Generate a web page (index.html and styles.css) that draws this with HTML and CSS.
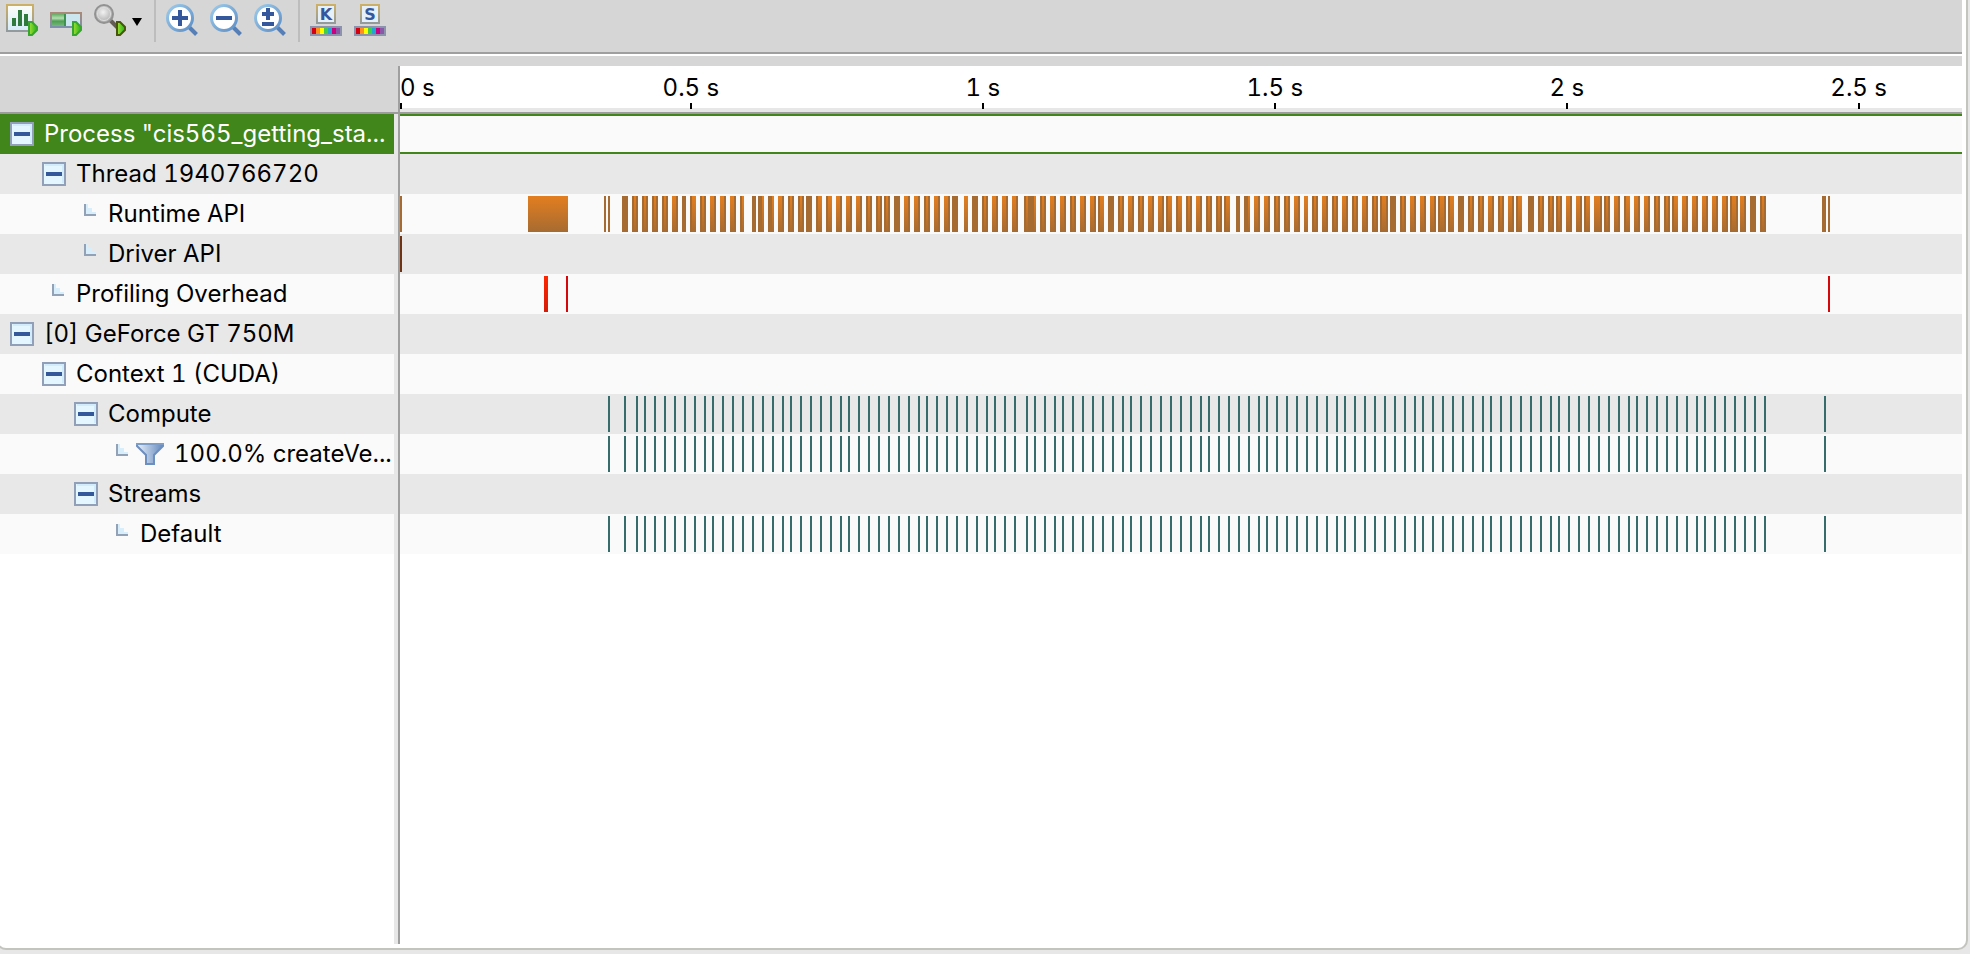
FILE: index.html
```html
<!DOCTYPE html>
<html lang="en">
<head>
<meta charset="utf-8">
<title>Profiler timeline</title>
<link rel="stylesheet" href="styles.css">
</head>
<body>
<svg class="defs" width="0" height="0" aria-hidden="true">
  <defs>
    <linearGradient id="call" x1="0" y1="0" x2="0" y2="1"><stop offset="0" stop-color="#e37e1f"/><stop offset="1" stop-color="#a66b31"/></linearGradient>
    <linearGradient id="hot" x1="0" y1="0" x2="0" y2="1"><stop offset="0" stop-color="#ff2600"/><stop offset="1" stop-color="#d41c08"/></linearGradient>
    <linearGradient id="paper" x1="0" y1="0" x2="0" y2="1"><stop offset="0" stop-color="#fdfdf8"/><stop offset="1" stop-color="#d5ebf8"/></linearGradient>
    <linearGradient id="frame" x1="0" y1="0" x2="0" y2="1"><stop offset="0" stop-color="#cdb067"/><stop offset="1" stop-color="#919a9c"/></linearGradient>
    <linearGradient id="tube" x1="0" y1="0" x2="0" y2="1"><stop offset="0" stop-color="#a98a78"/><stop offset="1" stop-color="#7c91ae"/></linearGradient>
    <linearGradient id="fill" x1="0" y1="0" x2="0" y2="1"><stop offset="0" stop-color="#63ad63"/><stop offset=".35" stop-color="#b4deb0"/><stop offset=".6" stop-color="#4f9f55"/><stop offset="1" stop-color="#74b978"/></linearGradient>
    <radialGradient id="ball" cx=".45" cy=".4" r=".6"><stop offset="0" stop-color="#f2f2f2"/><stop offset="1" stop-color="#a9a9a9"/></radialGradient>
    <linearGradient id="rim" x1="0" y1="0" x2="1" y2="1"><stop offset="0" stop-color="#9ccbea"/><stop offset="1" stop-color="#5e8fc6"/></linearGradient>
    <linearGradient id="funnel" x1="0" y1="0" x2="1" y2="0"><stop offset=".1" stop-color="#dbe6f4"/><stop offset="1" stop-color="#6389bd"/></linearGradient>
    <linearGradient id="go" x1="0" y1="0" x2="1" y2="0"><stop offset="0" stop-color="#a6e034"/><stop offset="1" stop-color="#1fb41c"/></linearGradient>
    <symbol id="arrow" viewBox="0 0 32 32"><path d="M23 18h3l5 5v3l-5 5h-3z" fill="url(#go)" stroke-width="2"/></symbol>
    <symbol id="lens" viewBox="0 0 32 32">
      <path d="M23 23l7.500 7.500" stroke="#557fb6" stroke-width="4"/>
      <circle cx="14" cy="14" r="12.500" fill="#fff" stroke="url(#rim)" stroke-width="3"/>
    </symbol>
    <symbol id="palette" viewBox="0 0 32 32">
      <rect x="7" y="1" width="18" height="18" fill="#e6f0fb" stroke="url(#frame)" stroke-width="2"/>
      <path d="M0 22h32v10H0z" fill="#8b93ad"/>
      <path d="M2 24h4v6H2z" fill="#d20012"/><path d="M6 24h4v6H6z" fill="#ff8f1f"/><path d="M10 24h4v6h-4z" fill="#ffff00"/><path d="M14 24h4v6h-4z" fill="#43cc48"/><path d="M18 24h4v6h-4z" fill="#22a5d2"/><path d="M22 24h4v6h-4z" fill="#ca0080"/><path d="M26 24h4v6h-4z" fill="#8959a8"/>
    </symbol>
    <symbol id="minus" viewBox="0 0 24 24"><path d="M1 1h22v22H1z" fill="#e4f6ff" stroke="#91a0b8" stroke-width="2"/><path d="M3 3h18v18" fill="none" stroke="#d3ecfb" stroke-width="2"/><path d="M4 10h16v4H4z" fill="#35589a"/></symbol>
    <symbol id="corner" viewBox="0 0 24 24"><path d="M12 2h2v4h4v4h4v2H12z" fill="#d8effb"/><path d="M10 2h2v10h10v2H10z" fill="#93a1b6"/></symbol>
  </defs>
</svg>

<div class="window">
  <header class="toolbar" role="toolbar" aria-label="Timeline tools">
    <button class="tool" aria-label="Generate analysis"><svg viewBox="0 0 32 32">
      <rect x="1" y="1" width="26" height="26" fill="url(#paper)" stroke="url(#frame)" stroke-width="2"/>
      <path d="M6 14h4v8H6zM12 6h4v16h-4zM18 10h4v12h-4z" fill="#2f7a3c"/>
      <use href="#arrow" stroke="#37a52f"/></svg></button>
    <button class="tool" aria-label="Run timeline"><svg viewBox="0 0 32 32">
      <rect x="1" y="9" width="30" height="14" fill="#cbe6ee" stroke="url(#tube)" stroke-width="2"/>
      <path d="M2 10h13v12H2z" fill="url(#fill)"/><path d="M14 10h2v12h-2z" fill="#3f9150"/>
      <use href="#arrow" stroke="#37a52f"/></svg></button>
    <button class="tool" aria-label="Profile application"><svg viewBox="0 0 32 32">
      <path d="M16 16l8 8" stroke="#625c55" stroke-width="4"/>
      <circle cx="10" cy="10" r="9" fill="url(#ball)" stroke="#929292" stroke-width="2"/><circle cx="10" cy="10" r="6.500" fill="none" stroke="#dedede" stroke-width="1"/>
      <use href="#arrow" stroke="#48560b"/></svg></button>
    <button class="drop" aria-label="Profile options"><svg viewBox="0 0 10 8"><path d="M0 0h10L5 8z"/></svg></button>
    <span class="rule"></span>
    <button class="tool" aria-label="Zoom in"><svg viewBox="0 0 32 32"><use href="#lens"/><path d="M6 14h16M14 6v16" stroke="#35589c" stroke-width="4"/></svg></button>
    <button class="tool" aria-label="Zoom out"><svg viewBox="0 0 32 32"><use href="#lens"/><path d="M6 14h16" stroke="#35589c" stroke-width="4"/></svg></button>
    <button class="tool" aria-label="Zoom to fit"><svg viewBox="0 0 32 32"><use href="#lens"/><path d="M8 10h12M14 4v12M8 20h12" stroke="#35589c" stroke-width="4"/></svg></button>
    <span class="rule"></span>
    <button class="tool" aria-label="Color by kernel"><svg viewBox="0 0 32 32"><use href="#palette"/><text class="letter" x="16" y="16">K</text></svg></button>
    <button class="tool" aria-label="Color by stream"><svg viewBox="0 0 32 32"><use href="#palette"/><text class="letter" x="16" y="16">S</text></svg></button>
  </header>

  <div class="head">
    <div class="corner"></div>
    <div class="ruler">
      <div class="mark first">0 s</div>
      <div class="mark">0.5 s</div>
      <div class="mark">1 s</div>
      <div class="mark">1.5 s</div>
      <div class="mark">2 s</div>
      <div class="mark">2.5 s</div>
    </div>
  </div>

  <main class="body">
    <ul class="tree">
      <li class="row selected"><button class="knob" aria-label="Collapse process"><svg><use href="#minus"/></svg></button><span class="name">Process "cis565_getting_sta...</span></li>
      <li class="row level1"><button class="knob" aria-label="Collapse thread"><svg><use href="#minus"/></svg></button><span class="name">Thread 1940766720</span></li>
      <li class="row level2"><span class="knob"><svg><use href="#corner"/></svg></span><span class="name">Runtime API</span></li>
      <li class="row level2"><span class="knob"><svg><use href="#corner"/></svg></span><span class="name">Driver API</span></li>
      <li class="row level1"><span class="knob"><svg><use href="#corner"/></svg></span><span class="name">Profiling Overhead</span></li>
      <li class="row"><button class="knob" aria-label="Collapse device"><svg><use href="#minus"/></svg></button><span class="name">[0] GeForce GT 750M</span></li>
      <li class="row level1"><button class="knob" aria-label="Collapse context"><svg><use href="#minus"/></svg></button><span class="name">Context 1 (CUDA)</span></li>
      <li class="row level2"><button class="knob" aria-label="Collapse compute"><svg><use href="#minus"/></svg></button><span class="name">Compute</span></li>
      <li class="row level3"><span class="knob"><svg><use href="#corner"/></svg></span><svg class="filter" viewBox="0 0 28 22"><path d="M1 1h26v2L18 12v9h-8v-9L1 3z" fill="url(#funnel)" stroke="#6d8fc0" stroke-width="2"/><path d="M0 1h28" stroke="#7f9dc9" stroke-width="2"/></svg><span class="name">100.0% createVe...</span></li>
      <li class="row level2"><button class="knob" aria-label="Collapse streams"><svg><use href="#minus"/></svg></button><span class="name">Streams</span></li>
      <li class="row level3"><span class="knob"><svg><use href="#corner"/></svg></span><span class="name">Default</span></li>
    </ul>
    <div class="splitter"></div>
    <div class="lanes">
      <div class="lane selected"></div>
      <div class="lane"></div>
      <div class="lane" data-events="runtime"></div>
      <div class="lane" data-events="driver"></div>
      <div class="lane" data-events="overhead"></div>
      <div class="lane"></div>
      <div class="lane"></div>
      <div class="lane" data-events="kernels"></div>
      <div class="lane" data-events="kernels"></div>
      <div class="lane"></div>
      <div class="lane" data-events="kernels"></div>
    </div>
  </main>
</div>
<script src="timeline.js"></script>
</body>
</html>
```
FILE: timeline.js
```js
// Each lane is 781 time units wide; an event is "<start><segments>",
// one letter for each unit that the event covers.
const SPAN = 781;
const COLORS = { d: "#a66b31", o: "url(#call)", b: "#6f3415", h: "url(#hot)", r: "#d60709", k: "#366c6b" };

const kernelStarts = [
  104, 112, 118, 122, 127, 132, 137, 142, 147, 152, 156, 161, 166, 171, 176, 181, 186, 191, 195, 200,
  205, 210, 215, 220, 224, 229, 234, 239, 244, 249, 254, 259, 263, 268, 273, 278, 283, 288, 293, 297,
  302, 307, 313, 317, 322, 327, 331, 336, 341, 346, 351, 356, 361, 365, 370, 375, 380, 385, 390, 395,
  400, 404, 409, 414, 419, 424, 429, 433, 438, 443, 448, 453, 458, 463, 468, 472, 477, 482, 487, 492,
  497, 502, 507, 511, 516, 521, 526, 531, 536, 541, 545, 550, 555, 560, 565, 570, 575, 579, 584, 589,
  594, 599, 604, 609, 614, 618, 623, 628, 633, 638, 643, 648, 652, 657, 662, 667, 672, 677, 682, 712
];

const EVENTS = {
  runtime: `0d 64oooooooooooooooooooo 102d 104d 111ddd 116dod 121dod 126dod 131dod 136ood 141dd 145doo 150dod
    155ood 160ood 165ood 170do 176dd 179ddo 184ddo 189ood 194dod 199dod 203ddd 208doo 213doo 218ood 223ood
    228ood 233dod 238dod 242dod 247ddd 252ood 257ood 262dod 267ood 272ood 276ddd 282oo 286ddd 291dod 296ood
    301ood 306ood 312dodddo 320dod 325ood 330ood 335dod 340ood 345ood 349doo 354ddd 359dod 364ood 369dod
    374ood 379ood 383doo 388doo 393dod 398ood 403dod 408dod 412doo 418dd 422ddo 427ood 432ood 437dod 442dod
    447ood 452oo 456dod 461ood 466dod 471ood 476dod 481ood 486dod 490dood 495ddd 500dod 505ood 510ood 515ood
    519dood 524doo 529ddd 534dod 539dod 544ood 549dod 554ood 558doo 564ddd 569dod 574dod 578dod 583ood 588ood
    592doo 597oood 602dod 607ood 612doo 617ood 622ood 627dod 632dod 636doo 641ood 646ood 651ood 656ood 661ood
    665dood 670ood 675ddd 680dod 711dd 714d`,
  driver: "0b",
  overhead: "72hh 83r 714r",
  kernels: kernelStarts.map(s => s + "k").join(" ")
};

for (const lane of document.querySelectorAll("[data-events]")) {
  let bars = "";
  for (const item of EVENTS[lane.dataset.events].split(/\s+/)) {
    let x = parseInt(item, 10);
    for (const run of item.match(/([a-z])\1*/g)) {
      bars += `<rect x="${x}" y="1" width="${run.length}" height="18" fill="${COLORS[run[0]]}"/>`;
      x += run.length;
    }
  }
  lane.innerHTML = `<svg viewBox="0 0 ${SPAN} 20" preserveAspectRatio="none" shape-rendering="crispEdges">${bars}</svg>`;
}
```
FILE: styles.css
```css
* { box-sizing: border-box; }

body {
  margin: 0;
  height: 100vh;
  padding: 0 2px 4px 0;
  display: flex;
  overflow: hidden;
  background: #e7e7e7;
  color: #000;
  font: 24px/30px Inter, "Liberation Sans", sans-serif;
  font-variant-numeric: tabular-nums;
}

.defs { position: absolute; }

.window {
  flex: 1;
  min-width: 0;
  margin-left: -4px;
  padding: 0 4px 4px 2px;
  display: flex;
  flex-direction: column;
  background: #fff;
  border: 2px solid #c4c4bf;
  border-top: 0;
  border-radius: 0 0 10px 10px;
}

button {
  padding: 0;
  border: 0;
  background: none;
  font: inherit;
}

svg { display: block; width: 100%; height: 100%; }

.toolbar {
  height: 56px;
  padding: 0 6px;
  display: flex;
  gap: 12px;
  background: #d6d6d6;
  border-bottom: 2px solid #fff;
  box-shadow: inset 0 -2px #9f9f9f;
}

.tool { width: 32px; height: 32px; margin-top: 4px; }

.drop { width: 10px; height: 8px; margin: 18px 0 0 -6px; }

.rule { width: 2px; height: 42px; margin-right: -2px; background: #bdbdbd; }

.letter {
  font: bold 16px "DejaVu Sans", sans-serif;
  text-anchor: middle;
  fill: #35589c;
}

.head {
  display: flex;
  padding-top: 10px;
  background: #d6d6d6;
  border-bottom: 2px solid #9c9c9c;
}

.corner { flex: 0 0 398px; }

.ruler {
  flex: 1;
  min-width: 0;
  height: 46px;
  padding-top: 7px;
  display: flex;
  overflow: hidden;
  border-left: 2px solid #9f9f9f;
  background: linear-gradient(#fff 42px, #e7e7e7 42px);
}

.mark {
  flex: 0 0 18.69%;
  text-align: center;
}

.mark::after {
  content: "";
  display: block;
  width: 2px;
  height: 6px;
  margin: 0 auto;
  background: #000;
}

.mark.first { flex-basis: 9.28%; text-align: left; }
.mark.first::after { margin: 0; }

.body {
  flex: 1;
  min-height: 0;
  display: flex;
}

.tree {
  flex: 0 0 394px;
  margin: 0;
  padding: 0;
  list-style: none;
}

.splitter {
  flex: 0 0 6px;
  background: #e7e7e7;
  border-right: 2px solid #9f9f9f;
}

.lanes { flex: 1; min-width: 0; }

.row, .lane { height: 40px; background: #fafafa; }
.row:nth-child(even), .lane:nth-child(even) { background: #e8e8e8; }

.row {
  padding-left: 10px;
  display: flex;
  align-items: center;
  gap: 10px;
  white-space: nowrap;
}

.level1 { padding-left: 42px; }
.level2 { padding-left: 74px; }
.level3 { padding-left: 106px; }

.row.selected { background: #40861a; color: #fff; }
.lane.selected { border: solid #40861a; border-width: 2px 0; }

.knob { flex: 0 0 24px; height: 24px; }

.filter { flex: 0 0 28px; height: 22px; margin-left: -4px; }
```
